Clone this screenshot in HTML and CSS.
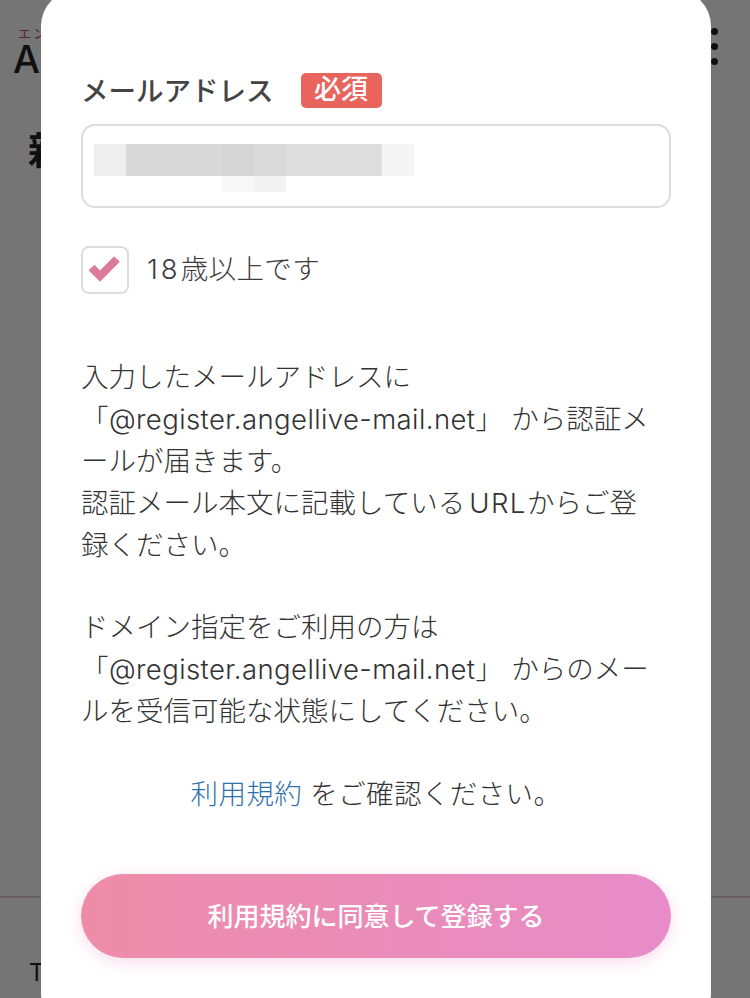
FILE: index.html
```html
<!DOCTYPE html>
<html lang="ja">
<head>
<meta charset="utf-8">
<title>メールアドレス登録</title>
<link rel="stylesheet" href="styles.css">
</head>
<body>
<div class="page">
  <header class="site-header">
    <div class="logo"><span class="logo-ruby">エンジェル</span><span class="logo-main">A</span></div>
    <div class="menu"><i></i><i></i><i></i></div>
  </header>
  <h1 class="page-title">新規登録</h1>
  <footer class="site-footer">Top</footer>
</div>
<div class="backdrop"></div>
<section class="modal">
  <div class="field-label"><span class="label-text">メールアドレス</span><span class="required">必須</span></div>
  <div class="input">
    <div class="mosaic">
      <i class="m1"></i><i class="m2 w3"></i><i class="m3"></i><i class="m4"></i><i class="m5 w3"></i><i class="m6"></i>
    </div>
    <div class="mosaic mosaic-low">
      <i class="m7"></i><i class="m8"></i>
    </div>
  </div>
  <label class="check-row">
    <span class="checkbox">
      <svg viewBox="0 0 48 48" width="48" height="48"><path d="M10.5 21.5 L19 30 L36 13" fill="none" stroke="#dc7b9b" stroke-width="8"/></svg>
    </span>
    <span class="check-text"><span class="num">18</span>歳以上です</span>
  </label>
  <p class="notice">入力したメールアドレスに<br><span class="addr">「@register.angellive-mail.net」</span>から認証メールが届きます。<br>認証メール本文に記載している<span class="latin">URL</span>からご登録ください。</p>
  <p class="notice notice-second">ドメイン指定をご利用の方は<br><span class="addr">「@register.angellive-mail.net」</span>からのメールを受信可能な状態にしてください。</p>
  <p class="terms"><a href="#">利用規約</a> をご確認ください。</p>
  <button class="submit" type="button">利用規約に同意して登録する</button>
</section>
</body>
</html>
```

FILE: styles.css
```css
* { box-sizing: border-box; }
html, body { margin: 0; height: 100%; }
body {
  overflow: hidden;
  background: #fff;
  font-family: Inter, "Noto Sans CJK JP", "Noto Sans", sans-serif;
  color: #444;
}
.page {
  height: 998px;
  display: flex;
  flex-direction: column;
  color: #222;
}
.site-header {
  display: flex;
  justify-content: space-between;
  padding: 27px 32px 0 13px;
  height: 125px;
}
.logo { display: flex; flex-direction: column; line-height: 1; }
.logo-ruby { font-size: 13px; color: #c0476f; padding-left: 5px; letter-spacing: 2px; }
.logo-main { font-size: 38px; line-height: 34px; font-weight: 500; margin-top: 2px; }
.menu { display: flex; flex-direction: column; gap: 8px; padding-top: 1px; }
.menu i { display: block; width: 7px; height: 7px; border-radius: 50%; background: #222; }
.page-title { margin: 0; padding-left: 28px; font-size: 38px; font-weight: 700; line-height: 50px; }
.site-footer {
  margin-top: auto;
  height: 102px;
  border-top: 2px solid #e8c9d2;
  padding: 60px 0 0 29px;
  font-size: 24px;
  line-height: 30px;
}
.backdrop {
  position: fixed;
  inset: 0;
  background: rgba(0, 0, 0, .54);
}
.modal {
  position: fixed;
  left: 41px;
  top: -10px;
  width: 670px;
  height: 1040px;
  padding: 83px 40px 0;
  background: #fff;
  border-radius: 36px;
  line-break: loose;
}
.field-label {
  display: flex;
  align-items: center;
  gap: 27px;
  height: 34px;
  font-size: 27.5px;
  font-weight: 500;
  color: #444;
}
.label-text { padding-bottom: 3px; }
.required {
  width: 81px;
  height: 35px;
  border-radius: 5px;
  background: #e8645c;
  color: #fff;
  font-size: 27px;
  line-height: 34px;
  text-align: center;
}
.input {
  margin-top: 17px;
  height: 84px;
  border: 2px solid #ddd;
  border-radius: 14px;
  padding: 18px 11px 0;
}
.mosaic { display: flex; height: 32px; }
.mosaic i { display: block; width: 32px; height: 100%; }
.mosaic .w3 { width: 96px; }
.mosaic-low { height: 16px; padding-left: 128px; }
.m1 { background: #eeeeee; }
.m2 { background: #d9d9d9; }
.m3 { background: #d6d6d6; }
.m4 { background: #dadada; }
.m5 { background: #dedede; }
.m6 { background: #f5f5f5; }
.m7 { background: #f8f8f8; }
.m8 { background: #f3f3f3; }
.check-row {
  display: flex;
  align-items: center;
  gap: 18px;
  margin-top: 38px;
}
.checkbox {
  width: 48px;
  height: 48px;
  border: 2px solid #ddd;
  border-radius: 8px;
  display: block;
  overflow: hidden;
}
.checkbox svg { display: block; margin: -2px; }
.check-text { font-size: 27.5px; font-weight: 300; letter-spacing: .4px; padding-bottom: 7px; color: #3c3c3c; }
.num { letter-spacing: 3px; }
.notice {
  margin: 62px 0 0;
  padding-right: 16px;
  font-size: 27.5px;
  font-weight: 300;
  line-height: 42px;
  color: #333;
}
.addr { letter-spacing: .4px; margin-right: 8px; }
.latin { letter-spacing: 1.5px; margin-left: 4px; }
.notice-second { margin-top: 40px; }
.terms {
  margin: 41px 0 0;
  text-align: center;
  font-size: 27.5px;
  font-weight: 300;
  line-height: 42px;
  letter-spacing: .4px;
  color: #333;
}
.terms a { color: #2f72ab; text-decoration: none; }
.submit {
  display: block;
  width: 100%;
  height: 84px;
  margin-top: 59px;
  padding: 0 0 3px;
  border: 0;
  border-radius: 42px;
  background: linear-gradient(90deg, #ee8ca8, #e78cc8);
  box-shadow: 0 4px 16px rgba(235, 140, 190, .3);
  color: #fff;
  font-family: inherit;
  font-size: 26px;
  font-weight: 500;
}
```
